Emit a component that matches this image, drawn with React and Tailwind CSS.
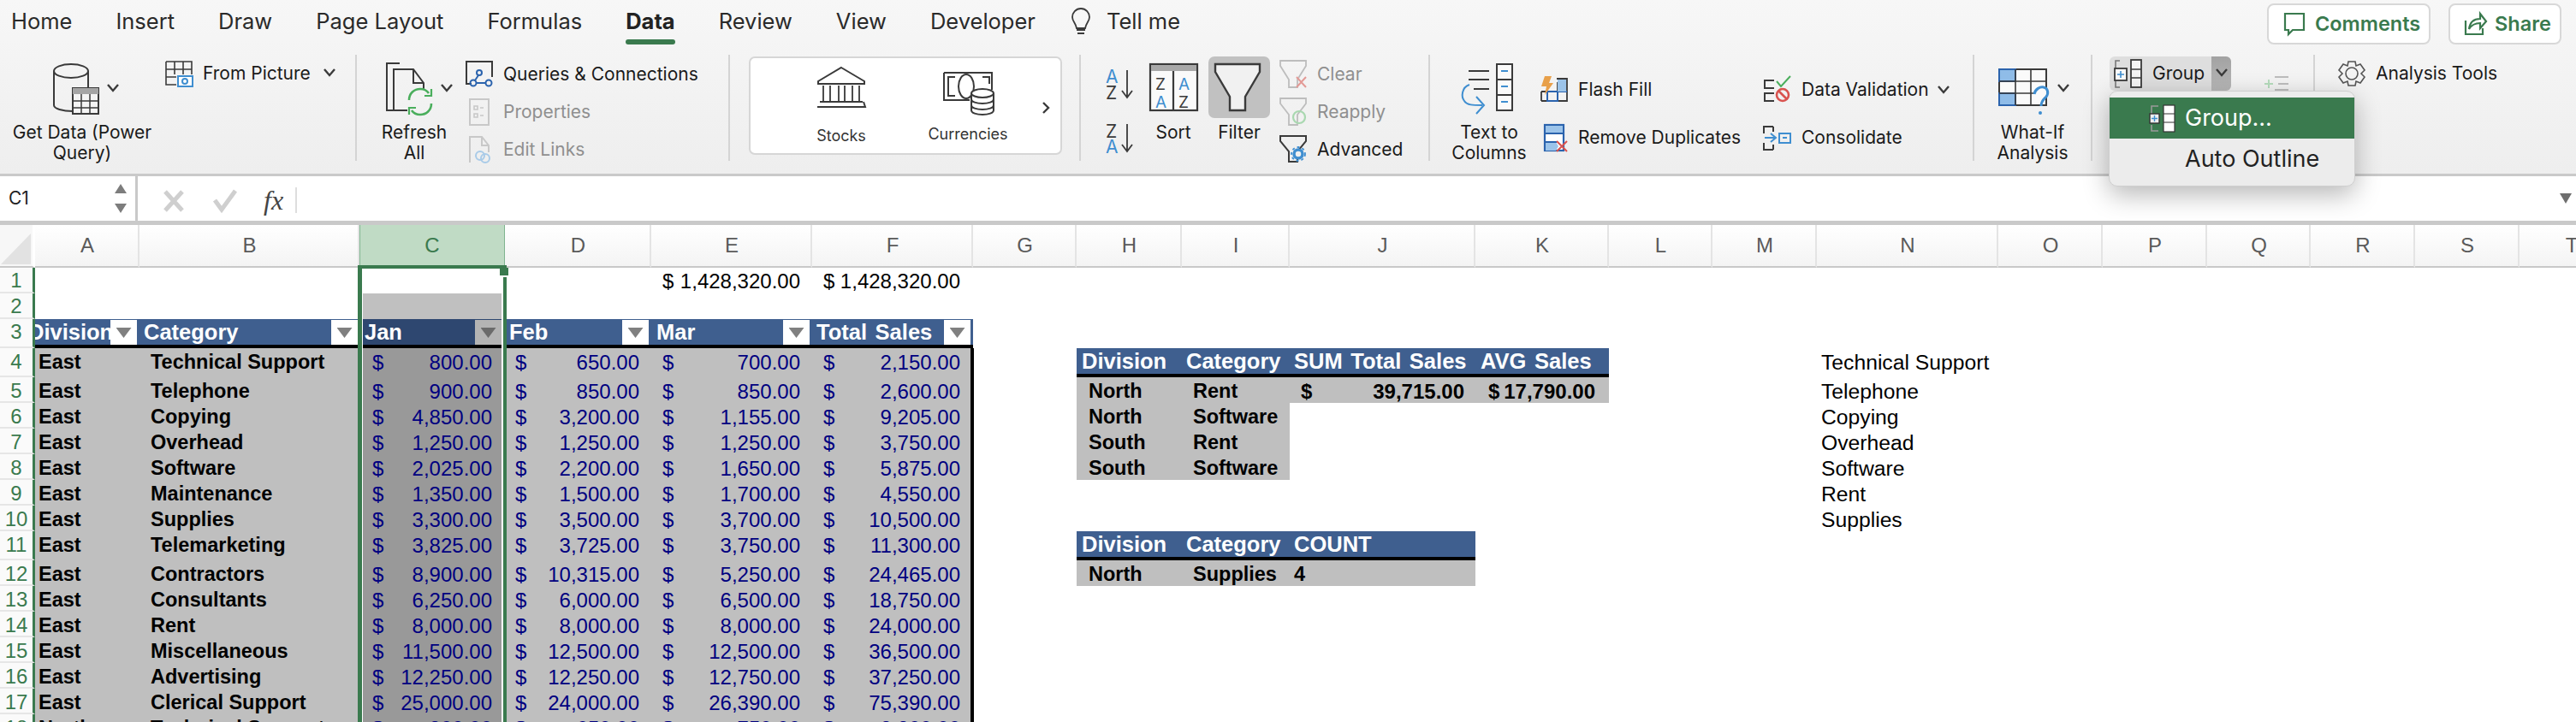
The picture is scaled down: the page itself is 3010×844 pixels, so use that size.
import React from "react";

const GREEN = "#3a7a4e";
const INK = "#3a3a3a";
const BLUE = "#3f8ed0";
const DEEP = "#2b63ad";

// svg whose viewBox is given in page pixels, so shapes can be drawn where they sit in the picture
function Ico({ box, className = "", children }) {
  const [, , w, h] = box.split(" ");
  return (
    <svg width={w} height={h} viewBox={box} fill="none" className={`shrink-0 overflow-visible ${className}`}>
      {children}
    </svg>
  );
}

const Chev = ({ x, y, s = INK }) => (
  <path d={`M${x - 6} ${y - 4}L${x} ${y + 3}L${x + 6} ${y - 4}`} stroke={s} strokeWidth="2.4" />
);

function Big({ w, icon, lines }) {
  return (
    <div className="flex flex-col items-center shrink-0" style={{ width: w }}>
      <div className="h-[79px] flex items-start justify-center">{icon}</div>
      {lines.map((l) => (
        <div key={l} className="text-[21px] leading-[24px] whitespace-nowrap text-[#1a1a1a]">
          {l}
        </div>
      ))}
    </div>
  );
}

function Small({ icon, label, off, h = "h-[44px]", children }) {
  return (
    <div className={`${h} shrink-0 flex items-center gap-[12px] whitespace-nowrap text-[21px] ${off ? "text-[#8f8f8f]" : "text-[#1a1a1a]"}`}>
      {icon}
      <span>{label}</span>
      {children}
    </div>
  );
}

function Group({ w, children, className = "", last }) {
  return (
    <div className={`h-[124px] flex shrink-0 ${last ? "" : "border-r-2 border-[#d4d4d4]"} ${className}`} style={{ width: w }}>
      {children}
    </div>
  );
}

function Ribbon() {
  const tabs = ["Home", "Insert", "Draw", "Page Layout", "Formulas", "Data", "Review", "View", "Developer"];
  return (
    <div className="h-[203px] shrink-0 bg-gradient-to-b from-[#f7f7f7] to-[#eeeeee] font-['Inter',sans-serif]">
      <div className="h-[52px] flex justify-between">
        <div className="flex items-start pl-[13px] gap-[51px] pt-[9px]">
          {tabs.map((t) => (
            <div key={t} className={`relative h-[43px] text-[25.5px] leading-[32px] whitespace-nowrap ${t === "Data" ? "font-bold text-[#222]" : "text-[#2a2a2a]"}`}>
              {t}
              {t === "Data" && <div className="absolute left-0 right-0 bottom-0 h-[6px] rounded-full bg-[#3a7a4e]" />}
            </div>
          ))}
          <div className="flex items-center gap-[17px] -ml-[11px]">
            <Ico box="1250 10 26 32">
              <path d="M1263 11c-6 0-10 5-10 10 0 5 4 7 5 13h10c1-6 5-8 5-13 0-5-4-10-10-10z" stroke={INK} strokeWidth="1.8" />
              <path d="M1258 36h10M1259 40h8" stroke={INK} strokeWidth="2" />
            </Ico>
            <span className="text-[25.5px] leading-[32px] text-[#2a2a2a]">Tell me</span>
          </div>
        </div>
        <div className="flex gap-[21px] pt-[4px] pr-[17px] h-[52px] text-[#3a7a4e] font-semibold text-[23.5px]">
          <div className="w-[191px] h-[48px] bg-white border-2 border-[#d8d8d8] rounded-[8px] flex items-center pl-[16px] gap-[10px]">
            <Ico box="2665 14 28 28">
              <path d="M2668 16h22v19h-13l-5 5v-5h-4z" stroke={GREEN} strokeWidth="2.2" />
            </Ico>
            <span>Comments</span>
          </div>
          <div className="w-[132px] h-[48px] bg-white border-2 border-[#d8d8d8] rounded-[8px] flex items-center pl-[16px] gap-[10px]">
            <Ico box="2878 14 26 28">
              <path d="M2880 24v16h20v-7M2884 34c1-8 6-12 13-12v-6l7 9-7 8v-6c-6 0-10 2-13 7z" stroke={GREEN} strokeWidth="2.2" />
            </Ico>
            <span>Share</span>
          </div>
        </div>
      </div>

      <div className="flex mt-[12px]">
        <Group w={417}>
          <div className="pl-[8px]">
            <Big
              w={176}
              lines={["Get Data (Power", "Query)"]}
              icon={
                <Ico box="46 64 100 79">
                  <ellipse cx="83" cy="83" rx="20" ry="8" stroke={INK} strokeWidth="2" />
                  <path d="M63 83v40c0 4 10 7 22 7M103 83v20" stroke={INK} strokeWidth="2" />
                  <rect x="85" y="103" width="30" height="30" fill="#f4f4f4" stroke={INK} strokeWidth="2" />
                  <rect x="85" y="103" width="30" height="7" fill="#a5a5a5" />
                  <path d="M95 110v23M105 110v23M85 118h30M85 126h30" stroke={INK} strokeWidth="1.5" />
                  <Chev x={132} y={103} />
                </Ico>
              }
            />
          </div>
          <div className="pl-[9px]">
            <Small
              label="From Picture"
              icon={
                <Ico box="193 68 32 32">
                  <path d="M194 70h30v15M194 70v27h12M204 70v15M214 70v15M194 79h30M194 88h12" stroke={INK} strokeWidth="1.6" />
                  <rect x="208" y="87" width="17" height="12" fill="#fff" stroke={BLUE} strokeWidth="2" />
                  <circle cx="216" cy="93" r="3" stroke={BLUE} strokeWidth="2" />
                </Ico>
              }
            >
              <Ico box="372 78 20 14">
                <Chev x={382} y={84} />
              </Ico>
            </Small>
          </div>
        </Group>

        <Group w={436}>
          <div className="pl-[7px]">
            <Big
              w={120}
              lines={["Refresh", "All"]}
              icon={
                <Ico box="424 64 120 79">
                  <path d="M467 74h-15v55h12" stroke={INK} strokeWidth="2" />
                  <path d="M460 129V81h23l12 16v8M483 81v16h12" stroke={INK} strokeWidth="2" />
                  <path d="M460 129h16" stroke={INK} strokeWidth="2" />
                  <path d="M478 117c0-8 6-13 13-13 4 0 8 2 10 5M504 121c0 8-6 13-13 13-4 0-8-2-10-5" stroke="#4aae5c" strokeWidth="2.6" />
                  <path d="M504 104v8h-8M478 134v-8h8" stroke="#4aae5c" strokeWidth="2.2" />
                  <Chev x={522} y={103} />
                </Ico>
              }
            />
          </div>
          <div className="flex flex-col pt-[1px]">
            <Small
              label="Queries & Connections"
              icon={
                <Ico box="544 72 32 32">
                  <path d="M551 99h-6V73h30v18" stroke={INK} strokeWidth="2" />
                  <circle cx="560" cy="86" r="3" stroke={DEEP} strokeWidth="2" />
                  <circle cx="553" cy="98" r="3.5" stroke={DEEP} strokeWidth="2" />
                  <circle cx="571" cy="98" r="3.5" stroke={DEEP} strokeWidth="2" />
                  <path d="M559 89l-4 6M557 98h10" stroke={DEEP} strokeWidth="2" />
                </Ico>
              }
            />
            <Small
              off
              label="Properties"
              icon={
                <Ico box="544 114 32 32">
                  <rect x="549" y="115" width="22" height="30" stroke="#c8c8c8" strokeWidth="2" />
                  <path d="M554 123h4v4h-4zM554 132h4v4h-4zM561 125h4M561 134h4" stroke="#c8c8c8" strokeWidth="1.6" />
                </Ico>
              }
            />
            <Small
              off
              label="Edit Links"
              icon={
                <Ico box="544 158 32 32">
                  <path d="M549 189v-30h14l8 10v8M563 159v10h8" stroke="#c8c8c8" strokeWidth="2" />
                  <circle cx="561" cy="181" r="5" stroke="#a9cbe8" strokeWidth="2" />
                  <circle cx="567" cy="184" r="5" stroke="#a9cbe8" strokeWidth="2" />
                </Ico>
              }
            />
          </div>
        </Group>

        <Group w={410} className="pl-[22px] pt-[2px]">
          <div className="w-[366px] h-[115px] bg-white border-2 border-[#d6d6d6] rounded-[7px] flex pl-[32px] text-[18px] text-[#333]">
            <div className="w-[148px] flex flex-col items-center pt-[10px]">
              <Ico box="955 78 56 48">
                <path d="M983 79l27 16v3h-54v-3zM957 98h52M958 119h50M955 125h56l-2-6" stroke={INK} strokeWidth="2" />
                <path d="M962 100v18M970 100v18M980 100v18M987 100v18M996 100v18M1004 100v18" stroke={INK} strokeWidth="1.8" />
              </Ico>
              <span className="mt-[21px] leading-[24px]">Stocks</span>
            </div>
            <div className="w-[148px] flex flex-col items-center pt-[16px]">
              <Ico box="1100 84 66 52">
                <path d="M1105 85h56v20M1105 85v32h30" stroke={INK} strokeWidth="2" />
                <path d="M1118 90h-8v22h8M1150 90h8v8" stroke={INK} strokeWidth="2" />
                <ellipse cx="1131" cy="101" rx="9" ry="14" stroke={INK} strokeWidth="2" />
                <ellipse cx="1150" cy="109" rx="13" ry="5" fill="#fff" stroke={INK} strokeWidth="2" />
                <path d="M1137 109v20c0 3 6 5 13 5s13-2 13-5v-20M1137 116c0 3 6 5 13 5s13-2 13-5M1137 123c0 3 6 5 13 5s13-2 13-5" stroke={INK} strokeWidth="2" />
              </Ico>
              <span className="mt-[9px] leading-[24px]">Currencies</span>
            </div>
            <div className="flex items-center pl-[10px] pt-[4px]">
              <Ico box="1218 114 14 20">
                <path d="M1222 118l6 6-6 6" stroke={INK} strokeWidth="2.4" />
              </Ico>
            </div>
          </div>
        </Group>

        <Group w={408}>
          <div className="pl-[28px] pt-[14px] flex flex-col gap-[27px] w-[79px]">
            <Ico box="1290 78 38 38">
              <text x="1291" y="97" fontSize="21" fill={BLUE} fontFamily="Inter">A</text>
              <text x="1291" y="116" fontSize="21" fill={INK} fontFamily="Inter">Z</text>
              <path d="M1316 82v32M1310 106l6 8 6-8" stroke={INK} strokeWidth="1.8" />
            </Ico>
            <Ico box="1290 144 38 38">
              <text x="1291" y="162" fontSize="21" fill={INK} fontFamily="Inter">Z</text>
              <text x="1291" y="180" fontSize="21" fill={BLUE} fontFamily="Inter">A</text>
              <path d="M1316 146v32M1310 170l6 8 6-8" stroke={INK} strokeWidth="1.8" />
            </Ico>
          </div>
          <Big
            w={58}
            lines={["Sort"]}
            icon={
              <Ico box="1342 64 58 79">
                <rect x="1344" y="75" width="55" height="54" fill="#fafafa" stroke={INK} strokeWidth="2.2" />
                <rect x="1345" y="76" width="53" height="7" fill="#a8a8a8" />
                <path d="M1371 83v46" stroke={INK} strokeWidth="2.2" />
                <text x="1350" y="105" fontSize="19" fill={INK} fontFamily="Inter">Z</text>
                <text x="1350" y="126" fontSize="19" fill={BLUE} fontFamily="Inter">A</text>
                <text x="1377" y="105" fontSize="19" fill={BLUE} fontFamily="Inter">A</text>
                <text x="1377" y="126" fontSize="19" fill={INK} fontFamily="Inter">Z</text>
              </Ico>
            }
          />
          <div className="ml-[12px] mr-[11px] w-[72px] relative">
            <div className="absolute left-0 top-[2px] w-[72px] h-[72px] rounded-[7px] bg-[#c1c1c1]" />
            <div className="relative">
              <Big
                w={72}
                lines={["Filter"]}
                icon={
                  <Ico box="1412 64 72 79">
                    <path d="M1420 75h52v9l-17 29v16h-18v-16l-17-29z" fill="#f1f1f1" stroke={INK} strokeWidth="2.4" />
                  </Ico>
                }
              />
            </div>
          </div>
          <div className="flex flex-col pt-[1px]">
            <Small
              off
              label="Clear"
              icon={
                <Ico box="1495 70 32 34">
                  <path d="M1496 71h30v6l-10 16v9h-10v-9l-10-16z" stroke="#bdbdbd" strokeWidth="1.8" />
                  <path d="M1515 90l11 12M1526 90l-11 12" stroke="#e39a96" strokeWidth="2" />
                </Ico>
              }
            />
            <Small
              off
              label="Reapply"
              icon={
                <Ico box="1495 114 32 34">
                  <path d="M1496 115h30v6l-10 13v12h-10v-12l-10-13z" stroke="#bdbdbd" strokeWidth="1.8" />
                  <circle cx="1518" cy="137" r="7" stroke="#a9d8b0" strokeWidth="2.2" />
                </Ico>
              }
            />
            <Small
              label="Advanced"
              icon={
                <Ico box="1495 158 32 34">
                  <path d="M1496 159h30v6l-10 12v12h-10v-12l-10-12z" stroke={INK} strokeWidth="2" />
                  <circle cx="1517" cy="180" r="5" fill="#f0f0f0" stroke={BLUE} strokeWidth="3.5" />
                  <circle cx="1517" cy="180" r="8" stroke={BLUE} strokeWidth="1.8" strokeDasharray="3 3" />
                </Ico>
              }
            />
          </div>
        </Group>

        <Group w={636}>
          <div className="pl-[19px]">
            <Big
              w={100}
              lines={["Text to", "Columns"]}
              icon={
                <Ico box="1690 64 100 79">
                  <path d="M1716 83h24M1716 93h24M1722 104h18" stroke={INK} strokeWidth="2.2" />
                  <rect x="1749" y="75" width="18" height="54" fill="#fafafa" stroke={INK} strokeWidth="2" />
                  <path d="M1749 93h18M1749 111h18" stroke={INK} strokeWidth="2" />
                  <path d="M1754 83h8M1754 101h8M1754 119h8" stroke={BLUE} strokeWidth="2" />
                  <path d="M1717 99c-9 3-10 14-6 19 3 5 10 5 21 5M1725 113l9 10-9 10" stroke={BLUE} strokeWidth="2" />
                </Ico>
              }
            />
          </div>
          <div className="ml-[10px] w-[261px] flex flex-col pt-[13px]">
            <Small
              h="h-[56px]"
              label="Flash Fill"
              icon={
                <Ico box="1800 88 32 32">
                  <path d="M1801 106h30M1801 117h30V91h-12M1808 106v11M1820 95v22M1801 106v11" stroke={INK} strokeWidth="1.8" />
                  <path d="M1808 106v11h12v-11M1808 106h23" stroke={DEEP} strokeWidth="2" />
                  <path d="M1820 92h10v14h-10z" fill="#9cc4ea" />
                  <path d="M1805 88h8l-3 8h5l-10 14 2-10h-6z" fill="#e8a04a" />
                </Ico>
              }
            />
            <Small
              h="h-[56px]"
              label="Remove Duplicates"
              icon={
                <Ico box="1800 144 32 32">
                  <rect x="1805" y="145" width="22" height="30" fill="#fff" stroke={DEEP} strokeWidth="2.2" />
                  <rect x="1806" y="146" width="20" height="9" fill="#9cc4ea" />
                  <path d="M1806 165h12l3 5-3 5h-12z" fill="#9cc4ea" />
                  <path d="M1805 155h22M1805 165h14" stroke={DEEP} strokeWidth="2" />
                  <path d="M1819 164l12 12M1831 164l-12 12" stroke="#d9534f" strokeWidth="2" />
                </Ico>
              }
            />
          </div>
          <div className="flex flex-col pt-[13px]">
            <Small
              h="h-[56px]"
              label="Data Validation"
              icon={
                <Ico box="2061 88 32 32">
                  <path d="M2073 93h-11v9h11M2073 108h-11v9h11" stroke={INK} strokeWidth="2" />
                  <path d="M2076 94l5 6 11-12" stroke="#4aae5c" strokeWidth="2" />
                  <circle cx="2083" cy="110" r="7" stroke="#d9534f" strokeWidth="2.6" />
                  <path d="M2078 105l10 10" stroke="#d9534f" strokeWidth="2.6" />
                </Ico>
              }
            >
              <Ico box="2264 98 18 14" className="-ml-[3px]">
                <Chev x={2272} y={105} />
              </Ico>
            </Small>
            <Small
              h="h-[56px]"
              label="Consolidate"
              icon={
                <Ico box="2061 144 32 32">
                  <path d="M2072 147h-11v8M2061 166v8h11" stroke={INK} strokeWidth="2" />
                  <path d="M2072 147v6M2072 168v6" stroke={INK} strokeWidth="2" />
                  <path d="M2062 160h12M2069 155l6 5-6 5" stroke={BLUE} strokeWidth="2" />
                  <rect x="2079" y="155" width="13" height="11" stroke={BLUE} strokeWidth="2" />
                  <path d="M2083 160h5" stroke={BLUE} strokeWidth="2" />
                </Ico>
              }
            />
          </div>
        </Group>

        <Group w={138} className="pl-[13px]">
          <Big
            w={110}
            lines={["What-If", "Analysis"]}
            icon={
              <Ico box="2320 64 110 79">
                <rect x="2336" y="81" width="55" height="42" fill="#fafafa" stroke={INK} strokeWidth="2" />
                <rect x="2336" y="81" width="19" height="14" fill="#8fbce8" stroke={DEEP} strokeWidth="2" />
                <rect x="2336" y="109" width="19" height="14" fill="#8fbce8" stroke={DEEP} strokeWidth="2" />
                <path d="M2336 95h55M2336 109h55M2355 81v42M2373 81v42" stroke={INK} strokeWidth="1.6" />
                <path d="M2377 110c1-6 7-9 11-8 5 1 6 7 3 11-3 3-6 5-6 11" stroke={BLUE} strokeWidth="3" fill="#fafafa" />
                <circle cx="2384" cy="132" r="2" fill={BLUE} />
                <Chev x={2411} y={103} />
              </Ico>
            }
          />
        </Group>

        <Group w={260} className="pl-[20px] pt-[2px]">
          <div className="w-[142px] h-[40px] rounded-[6px] bg-[#dedede] flex items-center">
            <Ico box="2468 68 36 36" className="ml-[3px]">
              <path d="M2477 71h-5v10M2472 94v8h5" stroke="#777" strokeWidth="1.6" />
              <rect x="2471" y="80" width="14" height="14" fill="#fafafa" stroke={INK} strokeWidth="1.8" />
              <path d="M2478 83v8M2474 87h8" stroke={BLUE} strokeWidth="1.6" />
              <rect x="2490" y="70" width="12" height="32" fill="#f4f4f4" stroke={INK} strokeWidth="1.8" />
              <path d="M2490 81h12M2490 91h12" stroke={INK} strokeWidth="1.6" />
            </Ico>
            <span className="ml-[11px] text-[21px] text-[#1a1a1a]">Group</span>
            <div className="ml-auto w-[23px] h-[40px] rounded-r-[6px] bg-gradient-to-b from-[#a2a2a2] to-[#b8b8b8] flex items-center justify-center">
              <Ico box="2590 80 12 12">
                <Chev x={2596} y={85} />
              </Ico>
            </div>
          </div>
          <Ico box="2643 86 34 20" className="ml-[36px] mt-[22px]">
            <path d="M2646 96h10M2651 91v10" stroke="#b5dcbc" strokeWidth="2" />
            <path d="M2658 88h16M2662 96h12M2658 103h16" stroke="#bdbdbd" strokeWidth="2" />
          </Ico>
        </Group>

        <Group w={300} last className="pl-[27px]">
          <Small
            label="Analysis Tools"
            icon={
              <Ico box="2732 68 32 32">
                <circle cx="2748" cy="84" r="7" stroke="#555" strokeWidth="1.6" />
                <path d="M2744 70h8l1 5 5-2 5 7-4 4 4 4-5 7-5-2-1 5h-8l-1-5-5 2-5-7 4-4-4-4 5-7 5 2z" stroke="#555" strokeWidth="1.6" />
              </Ico>
            }
          />
        </Group>
      </div>
    </div>
  );
}

function FormulaBar() {
  return (
    <div className="h-[60px] shrink-0 bg-white border-t-[3px] border-b-[5px] border-[#c9c9c9] flex font-['Inter',sans-serif]">
      <div className="w-[161px] h-full border-r-[3px] border-[#c9c9c9] flex items-center justify-between pl-[10px] pr-[8px] text-[21px] text-[#222]">
        <span>C1</span>
        <Ico box="134 212 18 40">
          <path d="M143 215l7 11h-14zM143 249l7-11h-14z" fill="#7d7d7d" />
        </Ico>
      </div>
      <div className="flex items-center pl-[29px] pt-[3px]">
        <Ico box="188 220 26 26">
          <path d="M191 223l20 22M211 223l-20 22" stroke="#cfcfcf" strokeWidth="5" />
        </Ico>
        <Ico box="244 220 32 26" className="ml-[30px]">
          <path d="M249 233l8 11 16-22" stroke="#cfcfcf" strokeWidth="5" />
        </Ico>
        <span className="ml-[30px] font-['Liberation_Serif',serif] italic text-[32px] text-[#444] leading-none">fx</span>
        <div className="ml-[14px] w-[2px] h-[30px] bg-[#dedede]" />
      </div>
      <div className="ml-auto flex items-center pr-[5px]">
        <Ico box="2990 226 14 12">
          <path d="M2990 226h14l-7 12z" fill="#6e6e6e" />
        </Ico>
      </div>
    </div>
  );
}

const DATA = [
  ["Technical Support", "800.00", "650.00", "700.00", "2,150.00"],
  ["Telephone", "900.00", "850.00", "850.00", "2,600.00"],
  ["Copying", "4,850.00", "3,200.00", "1,155.00", "9,205.00"],
  ["Overhead", "1,250.00", "1,250.00", "1,250.00", "3,750.00"],
  ["Software", "2,025.00", "2,200.00", "1,650.00", "5,875.00"],
  ["Maintenance", "1,350.00", "1,500.00", "1,700.00", "4,550.00"],
  ["Supplies", "3,300.00", "3,500.00", "3,700.00", "10,500.00"],
  ["Telemarketing", "3,825.00", "3,725.00", "3,750.00", "11,300.00"],
  ["Contractors", "8,900.00", "10,315.00", "5,250.00", "24,465.00"],
  ["Consultants", "6,250.00", "6,000.00", "6,500.00", "18,750.00"],
  ["Rent", "8,000.00", "8,000.00", "8,000.00", "24,000.00"],
  ["Miscellaneous", "11,500.00", "12,500.00", "12,500.00", "36,500.00"],
  ["Advertising", "12,250.00", "12,250.00", "12,750.00", "37,250.00"],
  ["Clerical Support", "25,000.00", "24,000.00", "26,390.00", "75,390.00"],
  ["Technical Support", "800.00", "650.00", "750.00", "2,200.00"],
];

const LETTERS = "ABCDEFGHIJKLMNOPQRST".split("");
const LIST = { 4: "Technical Support", 5: "Telephone", 6: "Copying", 7: "Overhead", 8: "Software", 9: "Rent", 10: "Supplies" };
const PAD = { 1: "pt-[2px]", 2: "pt-[2px]", 3: "pb-[2px]", 4: "", 11: "" };
const padFor = (r) => PAD[r] ?? "pt-[4px]";

function FilterBox({ dark }) {
  return (
    <div className={`w-[31px] h-[30px] mt-[1px] shrink-0 flex items-center justify-center ${dark ? "bg-[#b4b4b4]" : "bg-white"}`}>
      <div className={`w-[18px] h-[12px] ${dark ? "bg-[#6b6b6b]" : "bg-[#808080]"} [clip-path:polygon(0_0,100%_0,50%_100%)]`} />
    </div>
  );
}

function Head({ text, dark, className = "" }) {
  return (
    <div className={`h-full border-b-4 border-black flex justify-between overflow-hidden ${dark ? "bg-[#2e4770]" : "bg-[#3f5f8f]"} ${className}`}>
      <span className="self-center pt-[2px] text-white font-bold text-[25.5px] [word-spacing:2.5px] leading-none whitespace-nowrap">{text}</span>
      <FilterBox dark={dark} />
    </div>
  );
}

function Money({ v, pad, className = "", bold }) {
  return (
    <div className={`h-full flex justify-between items-center text-[24px] leading-none ${pad} ${bold ? "font-bold text-black" : "text-[#000080]"} ${className}`}>
      <span>$</span>
      <span>{v}</span>
    </div>
  );
}

const HeadText = ({ text, className = "" }) => (
  <div className={`h-full bg-[#3f5f8f] border-b-4 border-black flex items-center pt-[2px] text-white font-bold text-[25.5px] [word-spacing:2.5px] leading-none whitespace-nowrap ${className}`}>{text}</div>
);

const Bold = ({ text, pad, className = "" }) => (
  <div className={`h-full bg-[#bfbfbf] flex items-center font-bold text-[23.5px] leading-none text-black whitespace-nowrap ${pad} ${className}`}>{text}</div>
);

function SheetRow({ r }) {
  const pad = padFor(r);
  const d = r >= 4 ? DATA[r - 4] : null;
  const cells = {};

  if (r === 1) {
    cells.E = <div className={`h-full flex justify-between items-center pl-[13px] pr-[14px] text-[24px] leading-none text-black ${pad}`}><span>$</span><span>1,428,320.00</span></div>;
    cells.F = <div className={`h-full flex justify-between items-center pl-[13px] pr-[15px] text-[24px] leading-none text-black ${pad}`}><span>$</span><span>1,428,320.00</span></div>;
  }
  if (r === 2) {
    cells.C = <div className="mx-[4px] h-full bg-[#c0c0c0]" />;
  }
  if (r === 3) {
    cells.A = <Head text="Division" className="pr-[3px] [&>span]:-ml-[8px] [&>span]:w-[96px] [&>span]:overflow-hidden" />;
    cells.B = <Head text="Category" className="pl-[5px] pr-[2px]" />;
    cells.C = <div className="mx-[4px] h-full"><Head text="Jan" dark className="pl-[2px]" /></div>;
    cells.D = <Head text="Feb" className="pl-[5px] pr-[3px]" />;
    cells.E = <Head text="Mar" className="pl-[6px] pr-[3px]" />;
    cells.F = <Head text="Total Sales" className="pl-[5px] pr-[3px]" />;
  }
  if (d) {
    cells.A = <Bold text={r === 18 ? "North" : "East"} pad={pad} className="pl-[4px]" />;
    cells.B = <Bold text={d[0]} pad={pad} className="pl-[13px]" />;
    cells.C = <div className="mx-[4px] h-full bg-[#999999]"><Money v={d[1]} pad={pad} className="pl-[11px] pr-[11px]" /></div>;
    cells.D = <div className="h-full bg-[#bfbfbf]"><Money v={d[2]} pad={pad} className="pl-[12px] pr-[14px]" /></div>;
    cells.E = <div className="h-full bg-[#bfbfbf]"><Money v={d[3]} pad={pad} className="pl-[13px] pr-[14px]" /></div>;
    cells.F = <div className="h-full bg-[#bfbfbf] border-r-[4px] border-black -mr-[1px]"><Money v={d[4]} pad={pad} className="pl-[13px] pr-[12px]" /></div>;
  }

  // the two small result tables to the right of the data
  if (r === 4) {
    cells.H = <HeadText text="Division" className="pl-[6px]" />;
    cells.I = <HeadText text="Category" className="pl-[5px]" />;
    cells.J = <HeadText text="SUM Total Sales" className="pl-[5px]" />;
    cells.K = <HeadText text="AVG Sales" className="pl-[6px]" />;
  }
  if (r === 5) {
    cells.H = <Bold text="North" pad={pad} className="pl-[14px]" />;
    cells.I = <Bold text="Rent" pad={pad} className="pl-[13px]" />;
    cells.J = <div className="h-full bg-[#bfbfbf]"><Money bold v="39,715.00" pad={pad} className="pl-[13px] pr-[13px]" /></div>;
    cells.K = <div className="h-full bg-[#bfbfbf]"><Money bold v="17,790.00" pad={pad} className="pl-[15px] pr-[16px]" /></div>;
  }
  if (r >= 6 && r <= 8) {
    cells.H = <Bold text={r === 6 ? "North" : "South"} pad={pad} className="pl-[14px]" />;
    cells.I = <Bold text={r === 7 ? "Rent" : "Software"} pad={pad} className="pl-[13px]" />;
  }
  if (r === 11) {
    cells.H = <HeadText text="Division" className="pl-[6px]" />;
    cells.I = <HeadText text="Category" className="pl-[5px]" />;
    cells.J = <HeadText text="COUNT" className="pl-[5px]" />;
  }
  if (r === 12) {
    cells.H = <Bold text="North" pad={pad} className="pl-[14px]" />;
    cells.I = <Bold text="Supplies" pad={pad} className="pl-[13px]" />;
    cells.J = <Bold text="4" pad={pad} className="pl-[5px]" />;
  }
  if (LIST[r]) {
    cells.N = <div className={`h-full flex items-center pl-[5px] text-[24.7px] leading-none text-black whitespace-nowrap ${pad}`}>{LIST[r]}</div>;
  }

  return (
    <>
      <div className={`border-r-[3px] border-[#3a7a4e] border-b-2 border-b-[#e6e6e6] bg-[#fafafa] flex items-center justify-center text-[24px] leading-none text-[#3a7a4e] ${pad}`}>{r}</div>
      {LETTERS.map((l) => (
        <div key={l} className="min-w-0 h-full">
          {cells[l] ?? null}
        </div>
      ))}
    </>
  );
}

function Sheet() {
  const rows = Array.from({ length: 18 }, (_, i) => i + 1);
  return (
    <div className="relative flex-1 overflow-hidden bg-white font-['Liberation_Sans',sans-serif]">
      <div className="grid grid-cols-[41px_122px_257px_170px_171px_188px_188px_121px_123px_126px_217px_156px_121px_122px_212px_122px_122px_121px_122px_122px_122px] grid-rows-[50px_30px_30px_34px_34px_30px_30px_30px_30px_30px_30px_34px_30px_30px_30px_30px_30px_30px_30px]">
        <div className="border-r-[3px] border-white border-b-2 border-b-[#c8c8c8] bg-[#f7f7f7] flex items-end">
          <Ico box="0 270 36 40">
            <path d="M1 308L36 272V308z" fill="#e2e2e2" />
          </Ico>
        </div>
        {LETTERS.map((l) => (
          <div
            key={l}
            className={`border-b-2 border-b-[#c8c8c8] flex items-center justify-center text-[24px] leading-none ${
              l === "C" ? "bg-[#c0dbc5] text-[#3a7a4e] border-x border-x-[#7fb48f]" : "pl-[2px] bg-gradient-to-b from-white to-[#f4f4f4] text-[#5a5a5a] border-r-2 border-r-[#e4e4e4]"
            }`}
          >
            {l}
          </div>
        ))}
        {rows.map((r) => (
          <SheetRow key={r} r={r} />
        ))}
      </div>

      {/* selection frame around column C */}
      <div className="absolute left-[418px] top-[47px] w-[174px] h-[4px] bg-[#3a7a4e]" />
      <div className="absolute left-[418px] top-[47px] bottom-0 w-[5px] bg-[#3a7a4e]" />
      <div className="absolute left-[588px] top-[61px] bottom-0 w-[4px] bg-[#3a7a4e]" />
      <div className="absolute left-[584px] top-[50px] w-[10px] h-[9px] bg-[#3a7a4e]" />
    </div>
  );
}

function GroupMenu() {
  return (
    <div className="absolute left-[2464px] top-[106px] w-[288px] h-[112px] rounded-[10px] bg-[#ececec] border border-[#cfcfcf] shadow-[0_10px_30px_rgba(0,0,0,0.28)] pt-[7px] font-['Inter',sans-serif] text-[27px]">
      <div className="h-[48px] bg-[#3a7a4e] text-white flex items-center pl-[46px] gap-[10px]">
        <Ico box="2509 118 32 34">
          <path d="M2520 121h-8v9M2512 143v7h8" stroke="#9a9a9a" strokeWidth="1.6" />
          <rect x="2510" y="130" width="11" height="11" fill="#eee" stroke="#333" strokeWidth="1.4" />
          <path d="M2515.5 132v7M2512 135.5h7" stroke={BLUE} strokeWidth="1.4" />
          <rect x="2526" y="120" width="13" height="31" fill="#fff" stroke="#333" strokeWidth="1.2" />
          <path d="M2526 130h13M2526 140h13" stroke="#333" strokeWidth="1.2" />
        </Ico>
        <span>Group...</span>
      </div>
      <div className="h-[48px] flex items-center pl-[88px] text-[#222]">Auto Outline</div>
    </div>
  );
}

export default function App() {
  return (
    <div className="relative w-[3010px] h-[844px] overflow-hidden flex flex-col bg-white">
      <Ribbon />
      <FormulaBar />
      <Sheet />
      <GroupMenu />
    </div>
  );
}
